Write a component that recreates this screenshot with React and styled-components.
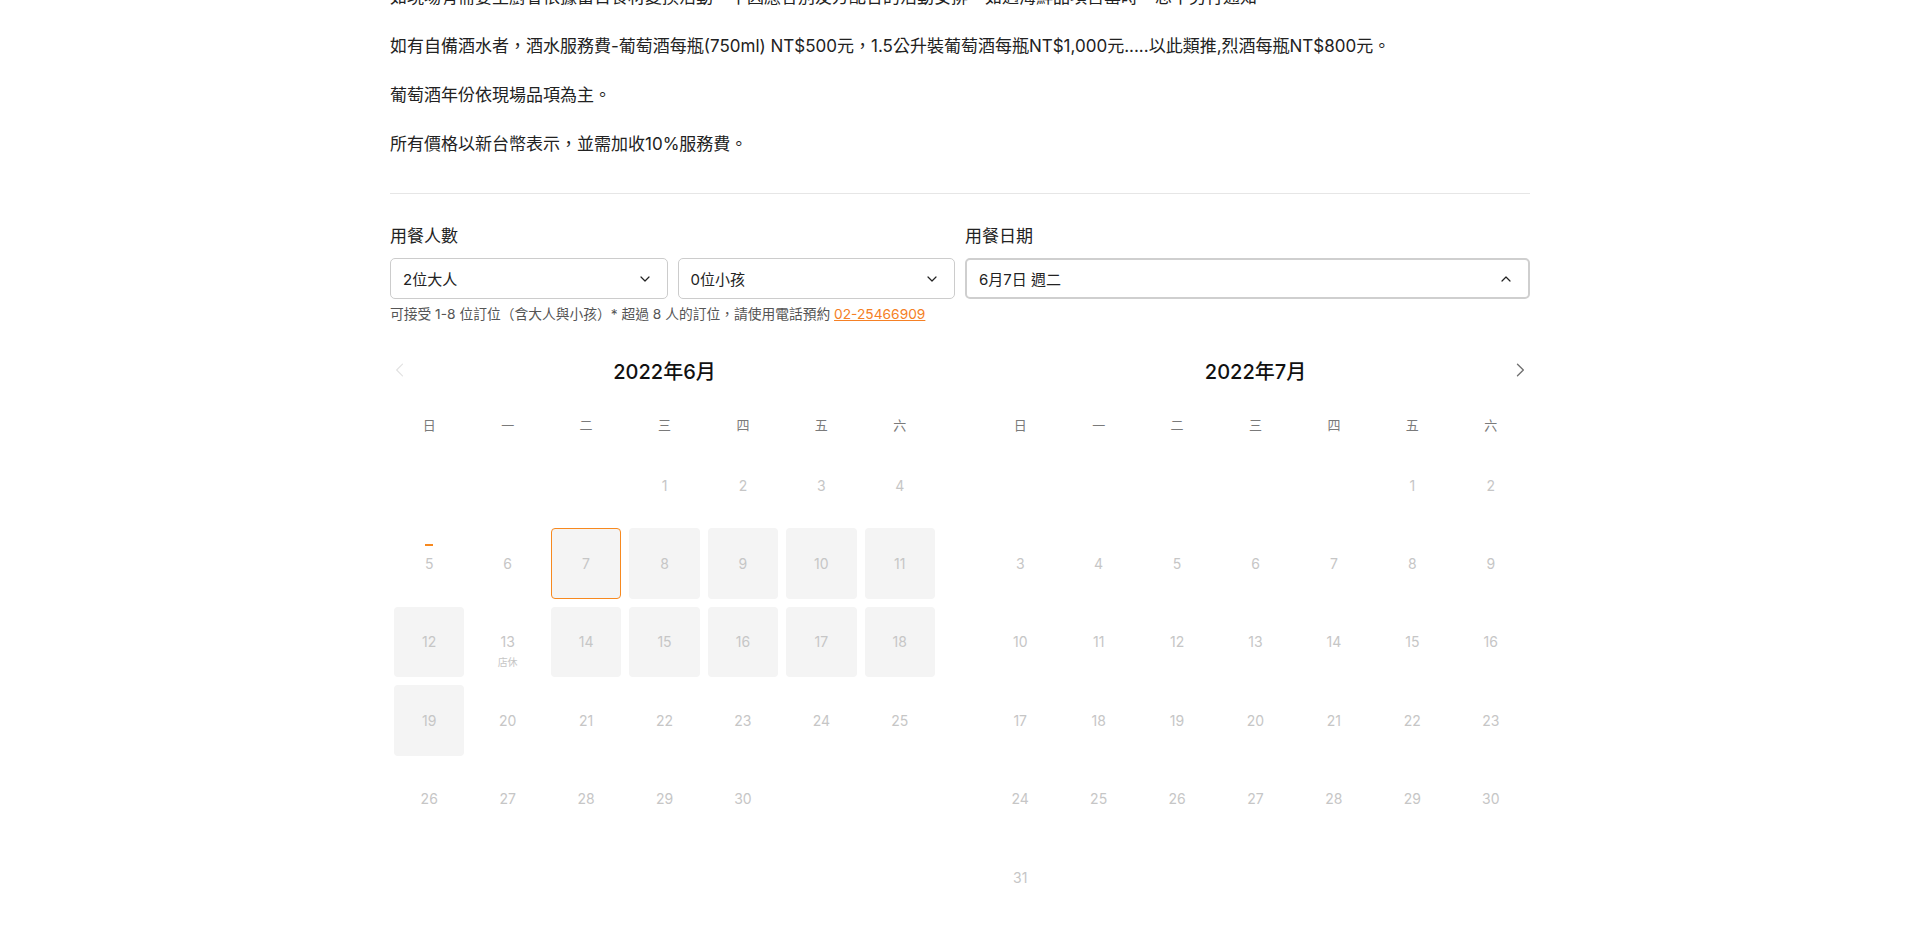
import React from 'react';
import styled, { createGlobalStyle } from 'styled-components';

const GlobalStyle = createGlobalStyle`
  html, body {
    margin: 0;
    background: #fff;
    overflow: hidden;
  }
  body {
    font-family: Inter, "Noto Sans CJK TC", sans-serif;
    color: #222;
  }
`;

const Page = styled.div`
  width: 1140px;
  margin: -16px auto 0;
`;

const Notes = styled.div`
  display: flex;
  flex-direction: column;
  gap: 22px;
  padding-bottom: 35px;
  border-bottom: 1px solid #e6e6e6;
`;

const Note = styled.p`
  margin: 0;
  font-size: 17px;
  line-height: 27px;
  color: #222;
`;

const Form = styled.div`
  display: grid;
  grid-template-columns: 1fr 1fr;
  gap: 10px;
  margin-top: 30px;
`;

const Field = styled.div`
  display: flex;
  flex-direction: column;
`;

const Label = styled.div`
  font-size: 17px;
  line-height: 24px;
  margin-bottom: 10px;
  color: #222;
`;

const SelectRow = styled.div`
  display: grid;
  grid-template-columns: 1fr 1fr;
  gap: 10px;
`;

const Select = styled.div`
  box-sizing: border-box;
  height: 41px;
  display: flex;
  align-items: center;
  justify-content: space-between;
  padding: 0 14px 0 12px;
  border: ${({ open }) => (open ? '2px solid #cfcfcf' : '1px solid #cccccc')};
  border-radius: 5px;
  font-size: 15px;
  color: #222;
  background: #fff;
`;

const Helper = styled.div`
  margin-top: 6px;
  font-size: 13.75px;
  line-height: 18px;
  color: #555;
  white-space: nowrap;
`;

const Phone = styled.a`
  color: #f58025;
  text-decoration: underline;
`;

const Calendar = styled.div`
  display: grid;
  grid-template-columns: 1fr 1fr;
  gap: 42px;
  margin-top: 27px;
`;

const Month = styled.div`
  display: flex;
  flex-direction: column;
`;

const MonthHead = styled.div`
  height: 40px;
  display: flex;
  align-items: center;
  justify-content: space-between;
  margin-bottom: 14px;
`;

const ArrowSlot = styled.div`
  width: 20px;
  display: flex;
  justify-content: center;
  color: ${({ faded }) => (faded ? '#e2e2e2' : '#6f6f6f')};
`;

const MonthTitle = styled.div`
  font-size: 20px;
  font-weight: 500;
  color: #111;
`;

const Weekdays = styled.div`
  display: grid;
  grid-template-columns: repeat(7, 1fr);
  height: 40px;
  align-items: center;
  text-align: center;
  font-size: 13px;
  color: #7a7a7a;
  margin-bottom: 2px;
`;

const Days = styled.div`
  display: grid;
  grid-template-columns: repeat(7, 1fr);
  grid-auto-rows: 78.4px;
`;

const Cell = styled.div`
  padding: 4px;
  box-sizing: border-box;
`;

const DayBox = styled.div`
  position: relative;
  box-sizing: border-box;
  height: 100%;
  display: flex;
  align-items: center;
  justify-content: center;
  border-radius: 4px;
  border: 1px solid ${({ selected }) => (selected ? '#f7891f' : 'transparent')};
  background: ${({ shaded }) => (shaded ? '#f4f4f4' : 'transparent')};
  font-size: 14px;
  color: #c6c6c6;
`;

const TodayMark = styled.span`
  position: absolute;
  left: 50%;
  top: calc(50% - 20px);
  width: 8px;
  height: 2px;
  margin-left: -4px;
  background: #f7891f;
`;

const DayNote = styled.span`
  position: absolute;
  left: 0;
  right: 0;
  top: calc(50% + 14px);
  text-align: center;
  font-size: 10px;
  line-height: 12px;
  color: #c6c6c6;
`;

function Chevron({ dir = 'down', size = 16, stroke = 1.8 }) {
  const paths = {
    down: 'M6 9l6 6 6-6',
    up: 'M6 15l6-6 6 6',
    left: 'M15 5l-7 7 7 7',
    right: 'M9 5l7 7-7 7',
  };
  return (
    <svg width={size} height={size} viewBox="0 0 24 24" fill="none" stroke="currentColor"
      strokeWidth={stroke} strokeLinecap="round" strokeLinejoin="round">
      <path d={paths[dir]} />
    </svg>
  );
}

const WEEKDAYS = ['日', '一', '二', '三', '四', '五', '六'];

const months = [
  { title: '2022年6月', offset: 3, length: 30, shaded: [7, 8, 9, 10, 11, 12, 14, 15, 16, 17, 18, 19], selected: 7, today: 5, closed: { 13: '店休' }, prev: true },
  { title: '2022年7月', offset: 5, length: 31, shaded: [], next: true },
];

function MonthView({ month }) {
  const blanks = Array.from({ length: month.offset });
  const days = Array.from({ length: month.length }, (_, i) => i + 1);
  return (
    <Month>
      <MonthHead>
        <ArrowSlot faded>{month.prev && <Chevron dir="left" size={20} stroke={1.4} />}</ArrowSlot>
        <MonthTitle>{month.title}</MonthTitle>
        <ArrowSlot>{month.next && <Chevron dir="right" size={20} stroke={1.6} />}</ArrowSlot>
      </MonthHead>
      <Weekdays>
        {WEEKDAYS.map((d) => <div key={d}>{d}</div>)}
      </Weekdays>
      <Days>
        {blanks.map((_, i) => <Cell key={`b${i}`} />)}
        {days.map((d) => (
          <Cell key={d}>
            <DayBox shaded={month.shaded.includes(d)} selected={month.selected === d}>
              {month.today === d && <TodayMark />}
              {d}
              {month.closed && month.closed[d] && <DayNote>{month.closed[d]}</DayNote>}
            </DayBox>
          </Cell>
        ))}
      </Days>
    </Month>
  );
}

export default function App() {
  return (
    <>
      <GlobalStyle />
      <Page>
        <Notes>
          <Note>如現場有需要主廚會依據當日食材變換活動，不因應各別友方配合的活動安排，如遇海鮮品項售罄時，恕不另行通知。</Note>
          <Note>如有自備酒水者，酒水服務費-葡萄酒每瓶(750ml) NT$500元，1.5公升裝葡萄酒每瓶NT$1,000元.....以此類推,烈酒每瓶NT$800元。</Note>
          <Note>葡萄酒年份依現場品項為主。</Note>
          <Note>所有價格以新台幣表示，並需加收10%服務費。</Note>
        </Notes>
        <Form>
          <Field>
            <Label>用餐人數</Label>
            <SelectRow>
              <Select>2位大人<Chevron dir="down" /></Select>
              <Select>0位小孩<Chevron dir="down" /></Select>
            </SelectRow>
            <Helper>
              可接受 1-8 位訂位（含大人與小孩）* 超過 8 人的訂位，請使用電話預約 <Phone>02-25466909</Phone>
            </Helper>
          </Field>
          <Field>
            <Label>用餐日期</Label>
            <Select open>6月7日 週二<Chevron dir="up" /></Select>
          </Field>
        </Form>
        <Calendar>
          {months.map((m) => <MonthView key={m.title} month={m} />)}
        </Calendar>
      </Page>
    </>
  );
}
